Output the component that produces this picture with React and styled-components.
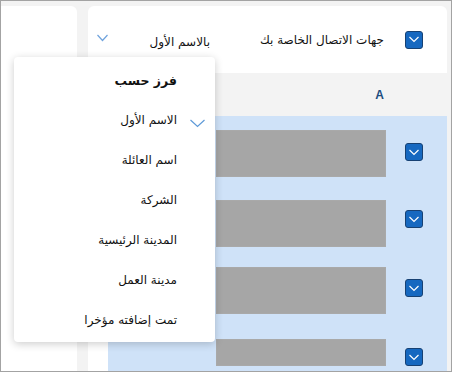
import React from "react";
import styled, { createGlobalStyle } from "styled-components";

const GlobalStyle = createGlobalStyle`
  html, body {
    margin: 0;
    padding: 0;
    background: #fff;
  }
  * {
    box-sizing: border-box;
  }
`;

const Frame = styled.div`
  position: relative;
  width: 452px;
  height: 372px;
  border: 1px solid #a3a3a3;
  background: #f3f3f3;
  display: flex;
  gap: 11px;
  padding: 5px 3px 0 0;
  overflow: hidden;
  font-family: "Segoe UI", "DejaVu Sans", sans-serif;
  color: #111;
`;

const SidePanel = styled.div`
  width: 76px;
  background: #fff;
  border-top-right-radius: 6px;
`;

const Main = styled.div`
  width: 359px;
  display: flex;
  flex-direction: column;
  min-height: 0;
`;

const Header = styled.div`
  flex: none;
  height: 67px;
  background: #fff;
  border-radius: 6px 6px 0 0;
  direction: rtl;
  display: flex;
  align-items: center;
  padding: 0 24px 0 9px;
`;

const Title = styled.span`
  margin-right: 21px;
  font-size: 12px;
  white-space: nowrap;
`;

const SortButton = styled.div`
  margin-right: auto;
  width: 113px;
  display: flex;
  align-items: center;
  justify-content: space-between;
  font-size: 12px;
  padding-top: 4px;
  white-space: nowrap;
  & > svg {
    margin-top: -7px;
  }
`;

const LetterRow = styled.div`
  flex: none;
  height: 43px;
  direction: rtl;
  display: flex;
  align-items: center;
  padding-right: 63px;
  font-size: 12px;
  font-weight: bold;
  color: #1c4c80;
  font-family: "Segoe UI", "Liberation Sans", sans-serif;
`;

const List = styled.div`
  flex: 1;
  min-height: 0;
  overflow: hidden;
  background: #fff;
  padding-left: 20px;
  display: flex;
`;

const SelectedArea = styled.div`
  flex: 1;
  background: #cfe2f8;
  direction: rtl;
  padding: 14px 24px 0 108px;
`;

const Row = styled.div`
  display: flex;
  align-items: flex-start;
  gap: 19px;
  margin-bottom: ${(p) => p.mb}px;
`;

const Placeholder = styled.div`
  flex: 1;
  height: ${(p) => p.h}px;
  background: #a6a6a6;
  border: 1px solid #a9a9a9;
`;

const Box = styled.div`
  flex: none;
  width: 18px;
  height: 18px;
  margin-top: ${(p) => p.mt || 0}px;
  border-radius: 3px;
  background: #1668c0;
  border: 1px solid #174173;
  display: flex;
  align-items: center;
  justify-content: center;
`;

const Menu = styled.div`
  position: absolute;
  left: 13px;
  top: 56px;
  width: 201px;
  background: #fff;
  border-radius: 4px;
  box-shadow: 0 2px 9px rgba(0, 0, 0, 0.2);
  direction: rtl;
  padding: 3px 0 2px;
`;

const MenuItem = styled.div`
  height: 40px;
  display: flex;
  align-items: center;
  gap: 12px;
  padding-right: 10px;
  font-size: ${(p) => (p.heading ? 12.5 : 12)}px;
  font-weight: ${(p) => (p.heading ? "bold" : "normal")};
  white-space: nowrap;
`;

const IconSlot = styled.span`
  width: 16px;
  display: flex;
  justify-content: center;
  padding-top: 6px;
`;

const Chevron = ({ w = 11, h = 6, color = "#6fa3dd" }) => (
  <svg width={w} height={h + 2} viewBox={`0 0 ${w} ${h + 2}`} fill="none">
    <polyline
      points={`0.5,1 ${w / 2},${h + 0.5} ${w - 0.5},1`}
      stroke={color}
      strokeWidth="1.2"
    />
  </svg>
);

const Checkbox = ({ mt }) => (
  <Box mt={mt}>
    <Chevron w={10} h={5} color="#fff" />
  </Box>
);

const rows = [
  { h: 47, mt: 13, mb: 23 },
  { h: 47, mt: 10, mb: 20 },
  { h: 47, mt: 12, mb: 25 },
  { h: 27, mt: 9, mb: 0 },
];

const sortOptions = [
  "الاسم الأول",
  "اسم العائلة",
  "الشركة",
  "المدينة الرئيسية",
  "مدينة العمل",
  "تمت إضافته مؤخرا",
];

export default function App() {
  return (
    <>
      <GlobalStyle />
      <Frame>
        <SidePanel />
        <Main>
          <Header>
            <Checkbox />
            <Title>جهات الاتصال الخاصة بك</Title>
            <SortButton>
              <span>بالاسم الأول</span>
              <Chevron />
            </SortButton>
          </Header>
          <LetterRow>A</LetterRow>
          <List>
            <SelectedArea>
              {rows.map((r, i) => (
                <Row key={i} mb={r.mb}>
                  <Checkbox mt={r.mt} />
                  <Placeholder h={r.h} />
                </Row>
              ))}
            </SelectedArea>
          </List>
        </Main>
        <Menu>
          <MenuItem heading>
            <IconSlot />
            فرز حسب
          </MenuItem>
          {sortOptions.map((label, i) => (
            <MenuItem key={label}>
              <IconSlot>{i === 0 && <Chevron w={15} h={7} color="#5e9ad8" />}</IconSlot>
              {label}
            </MenuItem>
          ))}
        </Menu>
      </Frame>
    </>
  );
}
